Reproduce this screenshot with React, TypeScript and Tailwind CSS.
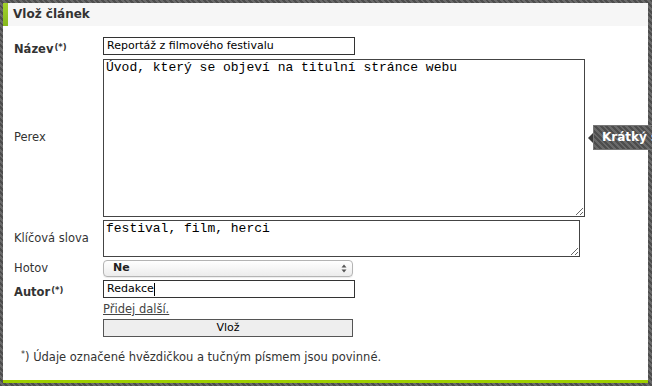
import React from 'react';

const stripes =
  'bg-[repeating-linear-gradient(45deg,#4d4d4d_0px,#4d4d4d_2px,#6a6a6a_2px,#6a6a6a_4px)]';

function Label({ children, bold }: { children: React.ReactNode; bold?: boolean }) {
  return (
    <div className={`w-[89px] shrink-0 text-[11.5px] text-[#333] ${bold ? 'font-bold' : ''}`}>
      {children}
    </div>
  );
}

function Req() {
  return <sup className="text-[8.5px] font-bold ml-px relative -top-[3px]">(*)</sup>;
}

export default function App() {
  return (
    <div
      className={`relative w-[652px] h-[386px] overflow-hidden ${stripes}`}
      style={{ fontFamily: '"DejaVu Sans", Verdana, sans-serif' }}
    >
      <div className="ml-[3px] mt-[3px] w-[645px] h-[380px] bg-white border-b-[3px] border-[#9fcf00] flex flex-col">
        {/* header */}
        <div className="flex h-[23px] bg-[#f6f6f6]">
          <div className="w-[5px] bg-[linear-gradient(#a2d12a,#86b81c)]" />
          <h1 className="pl-[5px] text-[12px] font-bold text-[#333] leading-[22px]">Vlož článek</h1>
        </div>

        <div className="pl-[11px] pt-[11px] flex flex-col">
          {/* Název */}
          <div className="flex items-start h-[18px]">
            <Label bold>
              <span className="inline-block pt-[4px]">
                Název
                <Req />
              </span>
            </Label>
            <div className="w-[252px] h-[18px] border border-[#333] px-[3px] text-[11px] leading-[16px] text-black">
              Reportáž z filmového festivalu
            </div>
          </div>

          {/* Perex */}
          <div className="flex items-center mt-[4px]">
            <Label>Perex</Label>
            <textarea
              readOnly
              className="w-[482px] h-[158px] border border-[#444] px-[2px] pt-0 text-[13px] leading-[15px] text-black outline-none resize"
              style={{ fontFamily: '"Liberation Mono", "Courier New", monospace' }}
              defaultValue="Úvod, který se objeví na titulní stránce webu"
            />
          </div>

          {/* Klíčová slova */}
          <div className="flex items-center mt-[3px]">
            <Label>Klíčová slova</Label>
            <textarea
              readOnly
              className="w-[477px] h-[37px] border border-[#444] px-[2px] pt-0 text-[13px] leading-[15px] text-black outline-none resize"
              style={{ fontFamily: '"Liberation Mono", "Courier New", monospace' }}
              defaultValue="festival, film, herci"
            />
          </div>

          {/* Hotov */}
          <div className="flex items-center mt-[3px]">
            <Label>Hotov</Label>
            <div className="w-[250px] h-[17px] rounded-[4px] border border-[#b4b4b4] bg-[linear-gradient(#ffffff,#ececec)] flex items-center justify-between pl-[9px] pr-[5px] shadow-[0_1px_1px_rgba(0,0,0,0.08)]">
              <span className="text-[11px] font-semibold text-[#222]">Ne</span>
              <svg width="6" height="9" viewBox="0 0 6 9" className="text-[#555]">
                <path d="M3 0.5L5.5 3.5H0.5Z" fill="currentColor" />
                <path d="M3 8.5L5.5 5.5H0.5Z" fill="currentColor" />
              </svg>
            </div>
          </div>

          {/* Autor */}
          <div className="flex items-start mt-[3px] h-[18px]">
            <Label bold>
              <span className="inline-block pt-[4px]">
                Autor
                <Req />
              </span>
            </Label>
            <div className="w-[252px] h-[18px] border border-[#333] px-[3px] text-[11px] leading-[16px] text-black flex items-center">
              Redakce
              <span className="inline-block w-px h-[13px] bg-black" />
            </div>
          </div>

          {/* link */}
          <div className="flex mt-[3px]">
            <div className="w-[89px] shrink-0" />
            <a href="#" className="text-[11.5px] text-[#444] underline leading-[16px]">
              Přidej další.
            </a>
          </div>

          {/* button */}
          <div className="flex mt-[2px]">
            <div className="w-[89px] shrink-0" />
            <button className="w-[250px] h-[18px] border border-[#555] bg-[#eeeeee] text-[11px] text-black leading-[16px]">
              Vlož
            </button>
          </div>

          {/* footnote */}
          <p className="mt-[12px] pl-[7px] text-[11.5px] text-[#333]">
            <sup className="text-[8px]">*</sup>) Údaje označené hvězdičkou a tučným písmem jsou povinné.
          </p>
        </div>
      </div>

      {/* tooltip */}
      <div className="absolute left-[593px] top-[125px] flex items-center">
        <div className="absolute -left-[5px] top-[8px] w-0 h-0 border-y-[5px] border-y-transparent border-r-[5px] border-r-[#3a3a3a]" />
        <div className={`h-[25px] pl-[8px] pr-[6px] border border-[#777] ${stripes} text-white text-[12px] font-bold leading-[23px] whitespace-nowrap`}>
          Krátký souhrn článku
        </div>
      </div>
    </div>
  );
}
